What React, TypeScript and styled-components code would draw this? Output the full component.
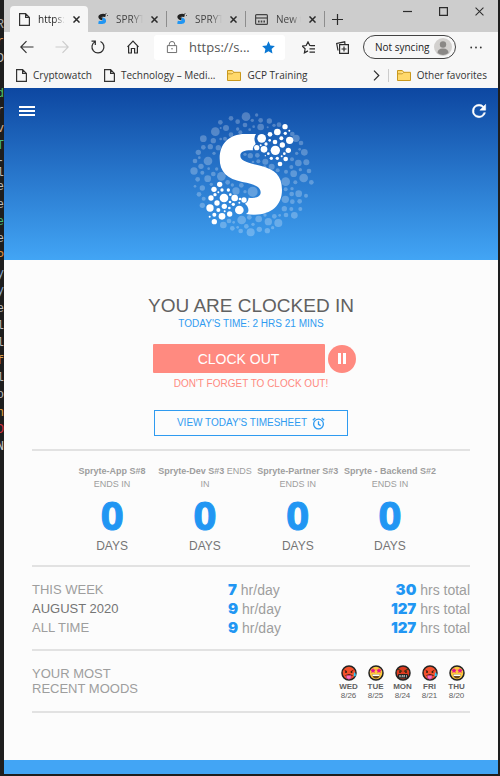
import React from "react";
import styled, { createGlobalStyle } from "styled-components";

const GlobalStyle = createGlobalStyle`
  * { box-sizing: border-box; }
  body { margin: 0; background: #1e1e1e; font-family: "Liberation Sans", Arial, sans-serif; }
  button, input { font: inherit; color: inherit; }
  button { border: 0; padding: 0; background: none; cursor: pointer; }
  a { color: inherit; text-decoration: none; }
  svg { display: block; flex: none; }
  h1, p { margin: 0; font-weight: 400; }
`;

const chromeFont = `"Open Sans", "Noto Sans", sans-serif`;

const Desktop = styled.div`
  display: flex;
  min-height: 100vh;
  padding: 0 2px 2px 0;
  background: #1e1e1e;
`;

const EditorEdge = styled.div`
  display: flex;
  flex-direction: column;
  flex: none;
  width: 4px;
  padding-top: 16px;
  overflow: hidden;
`;

const EditorLines = styled.div`
  display: flex;
  flex-direction: column;
  height: 440px;
`;

const EditorLine = styled.span<{ $color: string }>`
  display: flex;
  flex: 1;
  align-items: center;
  justify-content: flex-end;
  font: 12px/1 "Liberation Mono", monospace;
  color: ${(p) => p.$color};
`;

const BrowserWindow = styled.div`
  display: flex;
  flex-direction: column;
  flex: 1;
  min-width: 0;
  background: #fcfcfc;
`;

const TabStrip = styled.div`
  display: flex;
  align-items: flex-end;
  height: 32px;
  padding-left: 6px;
  background: #cdcdcd;
  font: 10px/16px ${chromeFont};
`;

const Tab = styled.div<{ $active?: boolean }>`
  display: flex;
  align-items: center;
  width: 78px;
  height: 26px;
  padding: 0 8px 0 9px;
  gap: 8px;
  border-radius: 4px 4px 0 0;
  color: ${(p) => (p.$active ? "#222" : "#444")};
  background: ${(p) => (p.$active ? "#f7f7f7" : "transparent")};
`;

const TabTitle = styled.span`
  flex: 1;
  min-width: 0;
  overflow: hidden;
  white-space: nowrap;
  mask-image: linear-gradient(90deg, #000 60%, transparent);
`;

const TabDivider = styled.span`
  width: 1px;
  height: 16px;
  margin-bottom: 5px;
  background: #8d8d8d;
`;

const ChromeButton = styled.button`
  display: flex;
  align-items: center;
  justify-content: center;
  color: #2b2b2b;
`;

const NewTabButton = styled(ChromeButton)`
  width: 25px;
  height: 26px;
`;

const WindowControls = styled.div`
  display: flex;
  align-self: flex-start;
  gap: 27px;
  margin-left: auto;
  padding: 5px 14px 0 0;
`;

const Toolbar = styled.div`
  display: flex;
  align-items: center;
  height: 30px;
  padding: 0 16px 0 16px;
  background: #f7f7f7;
`;

const NavButtons = styled.div`
  display: flex;
  gap: 21px;
`;

const AddressBar = styled.div`
  display: flex;
  flex: 1;
  align-items: center;
  min-width: 0;
  height: 25px;
  margin-left: 15px;
  padding: 0 10px 0 12px;
  gap: 11px;
  border-radius: 3px;
  background: #fff;
`;

const AddressInput = styled.input`
  flex: 1;
  min-width: 0;
  padding: 0;
  border: 0;
  outline: 0;
  background: none;
  font: 13px/20px ${chromeFont};
  color: #555;
`;

const ToolbarActions = styled.div`
  display: flex;
  align-items: center;
  gap: 14px;
  margin-left: 17px;
`;

const ProfileButton = styled.button`
  display: flex;
  align-items: center;
  justify-content: space-between;
  width: 93px;
  height: 24px;
  padding: 0 3px 0 11px;
  border: 1px solid #444;
  border-radius: 12px;
  font: 10px/16px ${chromeFont};
  color: #222;
  white-space: nowrap;
`;

const BookmarkBar = styled.nav`
  display: flex;
  align-items: center;
  height: 26px;
  padding: 0 11px 0 12px;
  gap: 12px;
  background: #f7f7f7;
  font: 10px/16px ${chromeFont};
  color: #333;
  white-space: nowrap;
`;

const Bookmark = styled.a`
  display: flex;
  align-items: center;
  gap: 6px;
`;

const BookmarkEnd = styled.div`
  display: flex;
  align-items: center;
  gap: 8px;
  margin-left: auto;
`;

const BookmarkRule = styled.span`
  width: 1px;
  height: 13px;
  background: #ccc;
`;

const Hero = styled.header`
  display: flex;
  align-items: flex-start;
  justify-content: space-between;
  height: 172px;
  padding: 7px 10px 0 14px;
  background: linear-gradient(180deg, #0d47a1, #42a5f5);
  color: #fff;
`;

const HeroButton = styled.button`
  display: flex;
  align-items: center;
  justify-content: center;
  width: 18px;
  height: 18px;
  margin-top: 7px;
`;

const Main = styled.main`
  display: flex;
  flex: 1;
  flex-direction: column;
  padding: 34px 28px 46px;
  color: #9e9e9e;
`;

const ClockPanel = styled.section`
  display: flex;
  flex-direction: column;
  align-items: center;
  padding-bottom: 13px;
`;

const Title = styled.h1`
  font-size: 19px;
  line-height: 24px;
  color: #616161;
`;

const TodayTime = styled.p`
  font-size: 10px;
  line-height: 12px;
  color: #2f9bf0;
`;

const ClockActions = styled.div`
  display: flex;
  align-items: center;
  gap: 3px;
  margin: 14px 0 5px;
  padding-left: 6px;
`;

const ClockOutButton = styled.button`
  width: 172px;
  height: 29px;
  border-radius: 1px;
  background: #ff8a80;
  color: #fff;
  font-size: 14px;
  line-height: 16px;
`;

const PauseButton = styled.button`
  display: flex;
  align-items: center;
  justify-content: center;
  width: 28px;
  height: 28px;
  border-radius: 50%;
  background: #ff8a80;
  color: #fff;
`;

const Reminder = styled.p`
  font-size: 10px;
  line-height: 12px;
  color: #ff8a80;
`;

const TimesheetButton = styled.button`
  display: flex;
  align-items: center;
  justify-content: center;
  gap: 5px;
  width: 194px;
  height: 26px;
  margin-top: 20px;
  border: 1px solid #2f9bf0;
  color: #2f9bf0;
  font-size: 10px;
  line-height: 12px;
`;

const Divider = styled.hr`
  width: 100%;
  height: 2px;
  margin: 0;
  border: 0;
  background: #e2e2e2;
`;

const Sprints = styled.section`
  display: grid;
  grid-template-columns: repeat(4, 1fr);
  width: 100%;
  max-width: 370px;
  margin: 0 auto;
  padding: 14px 0 11px;
  text-align: center;
`;

const SprintName = styled.p`
  font-size: 9px;
  line-height: 13px;
  white-space: pre;
`;

const SprintCount = styled.p`
  font: 700 40px/42px "Open Sans", sans-serif;
  -webkit-text-stroke: 1px #2196f3;
  color: #2196f3;
  margin-top: 3px;
`;

const SprintUnit = styled.p`
  margin-top: 2px;
  font-size: 12px;
  line-height: 16px;
  color: #757575;
`;

const Stats = styled.table`
  width: 100%;
  margin: 13px 0 12px;
  border-collapse: collapse;
  table-layout: fixed;
`;

const StatRow = styled.tr`
  height: 19px;
`;

const StatLabel = styled.th<{ $current?: boolean }>`
  padding: 0;
  text-align: left;
  vertical-align: top;
  font-size: 13px;
  font-weight: 400;
  line-height: 19px;
  color: ${(p) => (p.$current ? "#757575" : "#9e9e9e")};
`;

const StatCell = styled.td<{ $end?: boolean }>`
  padding: ${(p) => (p.$end ? "0" : "0 0 0 50px")};
  text-align: ${(p) => (p.$end ? "right" : "left")};
  font-size: 14px;
  line-height: 18px;
  white-space: nowrap;
`;

const StatValue = styled.strong`
  font: 900 15px/18px Inter, sans-serif;
  color: #2196f3;
`;

const Moods = styled.section`
  display: flex;
  align-items: flex-start;
  justify-content: space-between;
  height: 60px;
  padding: 14px 0 0;
`;

const MoodsLabel = styled.p`
  padding-top: 1px;
  font-size: 13px;
  line-height: 15px;
`;

const MoodList = styled.div`
  display: flex;
`;

const Mood = styled.div`
  display: flex;
  flex-direction: column;
  align-items: center;
  width: 27px;
  font-size: 8px;
  line-height: 9px;
  color: #616161;
`;

const MoodDay = styled.b`
  margin-top: 1px;
`;

const Footer = styled.footer`
  height: 14px;
  background: #42a5f5;
`;

type Dot = [number, number, number];

const brightDots: Dot[] = [
  [272, 130, 13], [297, 118, 7], [319, 111, 10], [342, 95, 8], [343, 115, 5], [355, 107, 3],
  [356, 136, 11], [331, 130, 6], [312, 141, 7], [296, 136, 4], [285, 147, 5], [269, 151, 3],
  [257, 158, 8], [279, 163, 10], [313, 166, 14], [334, 150, 8], [352, 166, 8], [340, 176, 4],
  [344, 192, 7], [327, 207, 7], [319, 190, 5], [301, 190, 5], [292, 176, 4], [283, 182, 2],
  [332, 184, 3], [146, 268, 8], [129, 283, 8], [153, 285, 5], [172, 285, 5], [142, 292, 3],
  [132, 299, 5], [120, 309, 8], [159, 309, 13], [178, 299, 4], [191, 309, 10], [207, 312, 4],
  [219, 315, 8], [138, 324, 8], [177, 321, 4], [187, 328, 5], [205, 323, 3], [117, 339, 11],
  [160, 334, 8], [142, 345, 6], [175, 339, 4], [205, 345, 13], [161, 349, 3], [176, 357, 8],
  [153, 364, 10], [130, 359, 6], [116, 365, 3], [130, 380, 8],
];

const faintDots: Dot[] = [
  [225, 65, 13], [257, 60, 5], [180, 70, 7], [148, 82, 7], [200, 80, 7], [244, 76, 5],
  [269, 76, 7], [295, 78, 8], [222, 90, 7], [165, 99, 9], [133, 110, 13], [149, 99, 3],
  [269, 96, 10], [248, 95, 4], [290, 97, 3], [309, 91, 5], [324, 89, 7], [236, 104, 4],
  [200, 102, 5], [208, 112, 6], [180, 119, 7], [97, 131, 10], [127, 137, 8], [149, 132, 4],
  [162, 131, 6], [364, 117, 7], [375, 130, 11], [390, 144, 7], [386, 163, 4], [377, 175, 5],
  [400, 172, 10], [97, 157, 7], [118, 155, 8], [142, 158, 8], [82, 172, 8], [129, 175, 5],
  [111, 198, 13], [72, 198, 7], [85, 188, 4], [90, 214, 8], [113, 221, 4], [137, 222, 5],
  [69, 228, 11], [94, 233, 6], [127, 237, 7], [151, 244, 13], [80, 253, 7], [110, 251, 10],
  [72, 274, 4], [94, 279, 8], [84, 298, 7], [98, 311, 6], [94, 331, 8], [121, 268, 5],
  [170, 262, 7], [184, 270, 5], [211, 271, 7], [245, 290, 15], [195, 288, 11], [222, 290, 5],
  [382, 204, 10], [406, 202, 9], [363, 193, 6], [361, 216, 6], [388, 224, 5], [414, 228, 7],
  [368, 236, 10], [398, 249, 13], [421, 262, 7], [344, 260, 13], [345, 230, 6], [373, 262, 6],
  [363, 281, 5], [383, 296, 10], [405, 302, 6], [362, 297, 7], [344, 283, 6], [343, 313, 11],
  [364, 320, 7], [386, 319, 7], [340, 341, 8], [361, 342, 6], [388, 342, 6], [370, 361, 10],
  [345, 360, 7], [326, 361, 4], [310, 364, 7], [282, 360, 5], [322, 384, 12], [292, 380, 11],
  [263, 372, 10], [305, 398, 5], [289, 407, 8], [265, 403, 8], [239, 412, 12], [246, 388, 5],
  [226, 394, 7], [209, 408, 7], [212, 375, 13], [184, 400, 7], [157, 390, 10], [174, 378, 7],
  [188, 382, 4], [200, 397, 4], [235, 367, 7], [238, 182, 8], [259, 181, 7], [222, 178, 5],
  [262, 199, 6], [246, 201, 4], [283, 200, 9], [281, 216, 5], [302, 215, 9], [320, 226, 6],
];

function Logo() {
  return (
    <svg width="160" height="160" viewBox="6 0 480 480" fill="#fff" role="img" aria-label="Spryte">
      <g opacity="0.25">
        {faintDots.map(([x, y, r], i) => (
          <circle key={i} cx={x} cy={y} r={r} />
        ))}
      </g>
      <path d="M255 117H222C174 117 146 147 146 190C146 232 169 252 214 261C254 268 269 277 269 292C269 305 256 311 233 308Q231 321 222 326Q234 336 232 349Q231 354 225 357Q235 359 250 359C302 358 333 330 333 284C333 242 311 223 271 213C226 203 208 196 208 182C208 170 221 165 246 166Q243 155 254 147Q246 129 255 117Z" />
      {brightDots.map(([x, y, r], i) => (
        <circle key={i} cx={x} cy={y} r={r} />
      ))}
    </svg>
  );
}

function PageIcon() {
  return (
    <svg width="11" height="13" viewBox="0 0 11 13" fill="none" stroke="#333" strokeWidth="1.2">
      <path d="M.6.6h6l3.8 3.8v8H.6zM6.6.6v3.8h3.8" />
    </svg>
  );
}

function FolderIcon() {
  return (
    <svg width="14" height="11" viewBox="0 0 14 11" fill="#ffd96b" stroke="#c9981c">
      <path d="M.5.5h4.8l1.5 1.8h6.7v8.2H.5zM.5 3.8h4.8l1.5-1.5" />
    </svg>
  );
}

function CloseIcon({ size = 7 }: { size?: number }) {
  return (
    <svg width={size} height={size} viewBox="0 0 8 8" stroke="currentColor" strokeWidth={size > 8 ? 0.9 : 1.7}>
      <path d="M.5.5l7 7M7.5.5l-7 7" />
    </svg>
  );
}

function SpryteIcon() {
  return (
    <svg width="11" height="12" viewBox="0 0 11 12" fill="none" strokeWidth="3">
      <path d="M8.6 2.6C4.5 1.6 2.5 3 3 4.5Q3.4 5.6 5.6 6" stroke="#222" />
      <path d="M5.4 6C8.3 6.6 8 9 6 9.4Q4 9.8 1.5 9.2" stroke="#2196f3" />
      <path d="M9 0v1M10.5 2v1" stroke="#555" strokeWidth="1" />
    </svg>
  );
}

function NewPageIcon() {
  return (
    <svg width="13" height="11" viewBox="0 0 13 11" fill="none" stroke="#444" strokeWidth="1.2">
      <rect x=".6" y=".6" width="11.8" height="9.8" rx="1" />
      <path d="M.6 4h11.8" />
      <path d="M3 7.5h1.6M5.7 7.5h1.6M8.4 7.5h1.6" strokeWidth="2" />
    </svg>
  );
}

const outline = { fill: "none", stroke: "currentColor", strokeWidth: 1.2 } as const;

function ArrowIcon({ forward }: { forward?: boolean }) {
  return (
    <svg width="14" height="14" viewBox="0 0 14 14" {...outline} stroke={forward ? "#ccc" : "#333"}>
      <path d={forward ? "M.5 7h12.7M7.5 1.2L13.2 7l-5.7 5.8" : "M13.5 7H.8M6.5 1.2L.8 7l5.7 5.8"} />
    </svg>
  );
}

function MoodFace({ kind }: { kind: "hot" | "star" | "mad" }) {
  return (
    <svg width="16" height="16" viewBox="0 0 32 32">
      <circle cx="16" cy="16" r="14" fill={kind === "star" ? "#ffc83d" : kind === "mad" ? "#dc3b20" : "#f4512c"} stroke="#222" strokeWidth="3" />
      {kind === "hot" && (
        <>
          <path d="M7 10l5 3M25 10l-5 3" stroke="#8c1a10" strokeWidth="2" />
          <circle cx="10" cy="14" r="2" fill="#321" />
          <circle cx="21" cy="14" r="2" fill="#321" />
          <path d="M9 21q7-4 14 0" fill="none" stroke="#421" strokeWidth="2" />
          <path d="M11 21h9v5q-4 5-9 0z" fill="#ff6fc0" stroke="#a03078" />
          <path d="M27 14q5 7 1 9-5 0-1-9z" fill="#35c7f4" />
        </>
      )}
      {kind === "star" && (
        <>
          <path d="M10 6l1.7 3.2 3.7.5-2.7 2.6.7 3.7-3.4-1.8L6.6 16l.7-3.7-2.7-2.6 3.7-.5zM22 6l1.7 3.2 3.7.5-2.7 2.6.7 3.7-3.4-1.8-3.4 1.8.7-3.7-2.7-2.6 3.7-.5z" fill="#e3128a" />
          <path d="M8 19h16q-2 8-8 8t-8-8z" fill="#6a4a20" />
          <path d="M9 19h14v3H9z" fill="#fff" />
        </>
      )}
      {kind === "mad" && (
        <>
          <path d="M6 8l8 5M26 8l-8 5" stroke="#431" strokeWidth="2.5" />
          <circle cx="10" cy="14" r="2" fill="#321" />
          <circle cx="22" cy="14" r="2" fill="#321" />
          <rect x="6" y="18" width="20" height="9" rx="2" fill="#222" />
          <path d="M10 20v5M8 22h4M15 20l-1 5M19 20l-1 5M13 22h7M23 20v5" stroke="#ddd" strokeWidth="1.3" />
        </>
      )}
    </svg>
  );
}

const editorLines = [
  ["R", "#aaa"], ["r", "#d89050"], ["D", "#bbb"], ["", "#bbb"], ["d", "#4ec46a"], ["er", "#bbb"], ["v", "#d0b090"],
  ["T", "#45b97c"], ["-l", "#bbb"], ["e", "#bbb"], ["e", "#bbb"], ["e", "#45b97c"], ["e", "#bbb"], ["P", "#e09040"],
  ["y", "#8ab0d8"], ["y", "#8ab0d8"], ["e", "#bbb"], ["el", "#bbb"], ["el", "#bbb"], ["af", "#d8a050"],
  ["el", "#bbb"], ["o", "#bbb"], ["n", "#e0a040"], ["D", "#d03040"], ["N", "#ccc"],
];

const sprints = [
  { name: "Spryte-App S#8", suffix: "\nENDS IN", days: 0 },
  { name: "Spryte-Dev S#3", suffix: " ENDS\nIN", days: 0 },
  { name: "Spryte-Partner S#3", suffix: "\nENDS IN", days: 0 },
  { name: "Spryte - Backend S#2", suffix: "\nENDS IN", days: 0 },
];

const stats = [
  { label: "THIS WEEK", perDay: 7, total: 30 },
  { label: "AUGUST 2020", perDay: 9, total: 127, current: true },
  { label: "ALL TIME", perDay: 9, total: 127 },
];

const moods = [
  { kind: "hot", day: "WED", date: "8/26" },
  { kind: "star", day: "TUE", date: "8/25" },
  { kind: "mad", day: "MON", date: "8/24" },
  { kind: "hot", day: "FRI", date: "8/21" },
  { kind: "star", day: "THU", date: "8/20" },
] as const;

function BrowserChrome() {
  return (
    <>
      <TabStrip>
        <Tab $active>
          <PageIcon />
          <TabTitle>https://</TabTitle>
          <ChromeButton aria-label="Close tab"><CloseIcon /></ChromeButton>
        </Tab>
        {["a", "b"].map((id) => (
          <React.Fragment key={id}>
            <Tab>
              <SpryteIcon />
              <TabTitle>SPRYTE</TabTitle>
              <ChromeButton aria-label="Close tab"><CloseIcon /></ChromeButton>
            </Tab>
            <TabDivider />
          </React.Fragment>
        ))}
        <Tab>
          <NewPageIcon />
          <TabTitle>New tab</TabTitle>
          <ChromeButton aria-label="Close tab"><CloseIcon /></ChromeButton>
        </Tab>
        <TabDivider />
        <NewTabButton aria-label="New tab">
          <svg width="11" height="11" viewBox="0 0 11 11" {...outline}><path d="M5.5 0v11M0 5.5h11" /></svg>
        </NewTabButton>
        <WindowControls>
          <ChromeButton aria-label="Minimize">
            <svg width="9" height="12" viewBox="0 0 9 12" {...outline}><path d="M0 6.5h9" /></svg>
          </ChromeButton>
          <ChromeButton aria-label="Maximize">
            <svg width="9" height="12" viewBox="0 0 9 12" {...outline}><path d="M.6 2.6h7.8v7.8H.6z" /></svg>
          </ChromeButton>
          <ChromeButton aria-label="Close"><CloseIcon size={9} /></ChromeButton>
        </WindowControls>
      </TabStrip>
      <Toolbar>
        <NavButtons>
          <ChromeButton aria-label="Back"><ArrowIcon /></ChromeButton>
          <ChromeButton aria-label="Forward"><ArrowIcon forward /></ChromeButton>
          <ChromeButton aria-label="Refresh">
            <svg width="16" height="14" viewBox="0 0 16 14" {...outline}><path d="M5 1.7A6 6 0 1 0 10.5 1.5M1.5 1.2H5.3V5" /></svg>
          </ChromeButton>
          <ChromeButton aria-label="Home">
            <svg width="12" height="14" viewBox="1 0 12 14" {...outline}><path d="M1.5 6.8L7 1.2l5.5 5.6M2.6 5.8v7.2h2.8V8.5h3.2V13h2.8V5.8" /></svg>
          </ChromeButton>
        </NavButtons>
        <AddressBar>
          <svg width="12" height="14" viewBox="0 0 13 14" fill="none" stroke="#666"><path d="M1.5 5.5h10v7.5h-10zM3.5 5.5V4a3 3 0 0 1 6 0v1.5" /><circle cx="6.5" cy="9" r=".8" fill="#666" stroke="none" /></svg>
          <AddressInput aria-label="Address" defaultValue="https://s..." />
          <ChromeButton aria-label="Favorite">
            <svg width="13" height="13" viewBox="0 0 24 24" fill="#0a78d4"><path d="M12 .5l3.5 7.6 8.3 1-6.1 5.7 1.6 8.2L12 18.9 4.700 23l1.600-8.200L.2 9.100l8.300-1z" /></svg>
          </ChromeButton>
        </AddressBar>
        <ToolbarActions>
          <ChromeButton aria-label="Favorites">
            <svg width="20" height="13" viewBox="1 0 20 13" {...outline}><path d="M10.500 4.500H8.800L7 .9 5.200 4.500l-4 .6 2.900 2.700-.7 4L7 9.900M9.500 4.700h4.500M8.500 7.900h5.500M8.500 11.100h5.500" /></svg>
          </ChromeButton>
          <ChromeButton aria-label="Collections">
            <svg width="13" height="13" viewBox="0 0 13 13" {...outline}><path d="M3.6 3.6h8.8v8.8H3.6zM8 5.5v5M5.5 8h5M2 9.5L.7 2.5 8.7.8 9 3.5" /></svg>
          </ChromeButton>
          <ProfileButton>
            Not syncing
            <svg width="18" height="18" viewBox="0 0 18 18"><circle cx="9" cy="9" r="9" fill="#d2d0ce" /><circle cx="9" cy="6.5" r="3.2" fill="#8a8886" /><path d="M3.5 15q0-4.500 5.500-4.500t5.500 4.500Q9 19 3.500 15z" fill="#8a8886" /></svg>
          </ProfileButton>
          <ChromeButton aria-label="Settings and more">
            <svg width="12" height="3" viewBox="0 0 12 3" fill="#333"><circle cx="1.2" cy="1.5" r=".9" /><circle cx="6" cy="1.5" r=".9" /><circle cx="10.8" cy="1.5" r=".9" /></svg>
          </ChromeButton>
        </ToolbarActions>
      </Toolbar>
      <BookmarkBar>
        <Bookmark href="#cryptowatch"><PageIcon />Cryptowatch</Bookmark>
        <Bookmark href="#technology"><PageIcon />Technology – Medi...</Bookmark>
        <Bookmark href="#gcp"><FolderIcon />GCP Training</Bookmark>
        <BookmarkEnd>
          <ChromeButton aria-label="More favorites">
            <svg width="7" height="11" viewBox="0 0 7 11" {...outline}><path d="M1 .7l4.8 4.8L1 10.3" /></svg>
          </ChromeButton>
          <BookmarkRule />
          <Bookmark href="#other"><FolderIcon />Other favorites</Bookmark>
        </BookmarkEnd>
      </BookmarkBar>
    </>
  );
}

export default function App() {
  return (
    <Desktop>
      <GlobalStyle />
      <EditorEdge aria-hidden="true">
        <EditorLines>
          {editorLines.map(([text, color], i) => (
            <EditorLine key={i} $color={color}>{text}</EditorLine>
          ))}
        </EditorLines>
      </EditorEdge>
      <BrowserWindow>
        <BrowserChrome />
        <Hero>
          <HeroButton aria-label="Menu">
            <svg width="16" height="12" viewBox="0 0 16 12" fill="#fff"><path d="M0 1h16v2H0zM0 5h16v2H0zM0 9h16v2H0z" /></svg>
          </HeroButton>
          <Logo />
          <HeroButton aria-label="Reload">
            <svg width="20" height="20" viewBox="0 0 24 24" fill="#fff"><path d="M17.65 6.35A7.96 7.96 0 0 0 12 4a8 8 0 1 0 7.73 10h-2.08A6 6 0 1 1 12 6c1.66 0 3.14.69 4.22 1.78L13 11h7V4z" stroke="#fff" strokeWidth=".6" /></svg>
          </HeroButton>
        </Hero>
        <Main>
          <ClockPanel>
            <Title>YOU ARE CLOCKED IN</Title>
            <TodayTime>TODAY'S TIME: 2 HRS 21 MINS</TodayTime>
            <ClockActions>
              <ClockOutButton>CLOCK OUT</ClockOutButton>
              <PauseButton aria-label="Pause">
                <svg width="8" height="11" viewBox="0 0 8 11" fill="#fff"><path d="M0 0h3v11H0zM5 0h3v11H5z" /></svg>
              </PauseButton>
            </ClockActions>
            <Reminder>DON'T FORGET TO CLOCK OUT!</Reminder>
            <TimesheetButton>
              VIEW TODAY'S TIMESHEET
              <svg width="13" height="13" viewBox="0 0 24 24" fill="none" stroke="currentColor" strokeWidth="2.4"><circle cx="12" cy="13" r="9" /><path d="M12 8v5.5l4 2.5M1.5 6L6 2M22.5 6L18 2" /></svg>
            </TimesheetButton>
          </ClockPanel>
          <Divider />
          <Sprints>
            {sprints.map((s) => (
              <div key={s.name}>
                <SprintName><b>{s.name}</b>{s.suffix}</SprintName>
                <SprintCount>{s.days}</SprintCount>
                <SprintUnit>DAYS</SprintUnit>
              </div>
            ))}
          </Sprints>
          <Divider />
          <Stats>
            <tbody>
              {stats.map((s) => (
                <StatRow key={s.label}>
                  <StatLabel scope="row" $current={s.current}>{s.label}</StatLabel>
                  <StatCell><StatValue>{s.perDay}</StatValue> hr/day</StatCell>
                  <StatCell $end><StatValue>{s.total}</StatValue> hrs total</StatCell>
                </StatRow>
              ))}
            </tbody>
          </Stats>
          <Divider />
          <Moods>
            <MoodsLabel>YOUR MOST<br />RECENT MOODS</MoodsLabel>
            <MoodList>
              {moods.map((m) => (
                <Mood key={m.day}>
                  <MoodFace kind={m.kind} />
                  <MoodDay>{m.day}</MoodDay>
                  <span>{m.date}</span>
                </Mood>
              ))}
            </MoodList>
          </Moods>
          <Divider />
        </Main>
        <Footer />
      </BrowserWindow>
    </Desktop>
  );
}
